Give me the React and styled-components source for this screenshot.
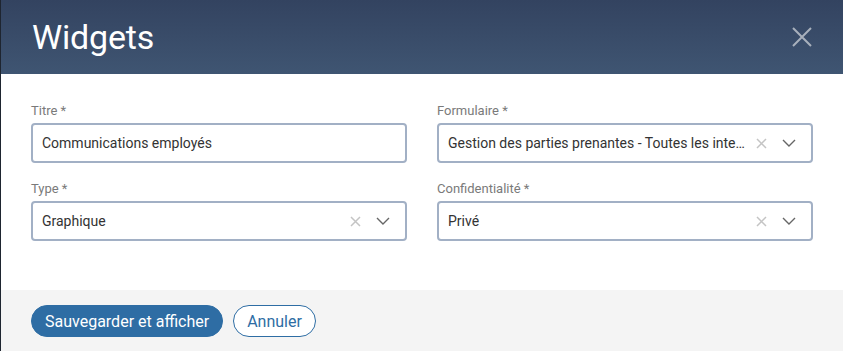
import React from "react";
import styled, { createGlobalStyle } from "styled-components";

const GlobalStyle = createGlobalStyle`
  html, body {
    margin: 0;
    padding: 0;
    background: #1e2530;
  }
  body {
    font-family: Roboto, "Liberation Sans", Arial, sans-serif;
  }
`;

const Modal = styled.div`
  width: 842px;
  height: 351px;
  margin-left: 1px;
  display: flex;
  flex-direction: column;
  background: #fff;
`;

const Header = styled.div`
  height: 74px;
  flex: none;
  display: flex;
  align-items: center;
  justify-content: space-between;
  padding: 0 30px 0 31px;
  background: linear-gradient(180deg, #334360 0%, #3f5572 100%);
`;

const Title = styled.h1`
  margin: 0;
  font-size: 34px;
  font-weight: 400;
  color: #fff;
  letter-spacing: -0.2px;
`;

const CloseButton = styled.button`
  border: 0;
  background: none;
  padding: 0;
  width: 22px;
  height: 22px;
  display: flex;
  align-items: center;
  justify-content: center;
  cursor: pointer;
`;

const Body = styled.div`
  flex: 1;
  padding: 29px 30px 0 30px;
  display: grid;
  grid-template-columns: minmax(0, 1fr) minmax(0, 1fr);
  column-gap: 30px;
  row-gap: 18px;
  align-content: start;
`;

const Field = styled.div`
  display: flex;
  flex-direction: column;
  min-width: 0;
`;

const Label = styled.label`
  font-size: 13px;
  line-height: 16px;
  color: #7a7a7a;
  margin-bottom: 4px;
`;

const Box = styled.div`
  height: 40px;
  box-sizing: border-box;
  border: 2px solid #a2b0c5;
  border-radius: 4px;
  display: flex;
  align-items: center;
  padding: 0 15px 0 9px;
  font-size: 14px;
  color: #333;
  background: #fff;
`;

const Value = styled.span`
  flex: 1;
  min-width: 0;
  white-space: nowrap;
  overflow: hidden;
  text-overflow: ellipsis;
`;

const Icons = styled.div`
  display: flex;
  align-items: center;
  gap: 15px;
  margin-left: 10px;
  flex: none;
`;

const Footer = styled.div`
  height: 61px;
  flex: none;
  background: #f4f4f4;
  display: flex;
  align-items: flex-start;
  gap: 10px;
  padding: 15px 30px 0 30px;
  box-sizing: border-box;
`;

const Button = styled.button`
  height: 32px;
  box-sizing: border-box;
  border-radius: 16px;
  padding: 0 13px;
  font-family: inherit;
  font-size: 16px;
  border: 1px solid #2e6da4;
  background: ${(p) => (p.$primary ? "#2e6da4" : "#fff")};
  color: ${(p) => (p.$primary ? "#fff" : "#2e6da4")};
  cursor: pointer;
`;

const ClearIcon = () => (
  <svg width="11" height="11" viewBox="0 0 11 11">
    <path d="M1 1L10 10M10 1L1 10" stroke="#c4c4c4" strokeWidth="1.5" fill="none" />
  </svg>
);

const ChevronIcon = () => (
  <svg width="14" height="8" viewBox="0 0 14 8">
    <path d="M1 1L7 7L13 1" stroke="#666" strokeWidth="1.4" fill="none" />
  </svg>
);

const TextInput = ({ label, value }) => (
  <Field>
    <Label>{label}</Label>
    <Box>
      <Value>{value}</Value>
    </Box>
  </Field>
);

const Select = ({ label, value }) => (
  <Field>
    <Label>{label}</Label>
    <Box>
      <Value title={value}>{value}</Value>
      <Icons>
        <ClearIcon />
        <ChevronIcon />
      </Icons>
    </Box>
  </Field>
);

export default function App() {
  return (
    <>
      <GlobalStyle />
      <Modal>
        <Header>
          <Title>Widgets</Title>
          <CloseButton aria-label="Fermer">
            <svg width="20" height="20" viewBox="0 0 20 20">
              <path d="M1 1L19 19M19 1L1 19" stroke="#a8b0bc" strokeWidth="2" fill="none" />
            </svg>
          </CloseButton>
        </Header>
        <Body>
          <TextInput label="Titre *" value="Communications employés" />
          <Select
            label="Formulaire *"
            value="Gestion des parties prenantes - Toutes les interactions"
          />
          <Select label="Type *" value="Graphique" />
          <Select label="Confidentialité *" value="Privé" />
        </Body>
        <Footer>
          <Button $primary>Sauvegarder et afficher</Button>
          <Button>Annuler</Button>
        </Footer>
      </Modal>
    </>
  );
}
